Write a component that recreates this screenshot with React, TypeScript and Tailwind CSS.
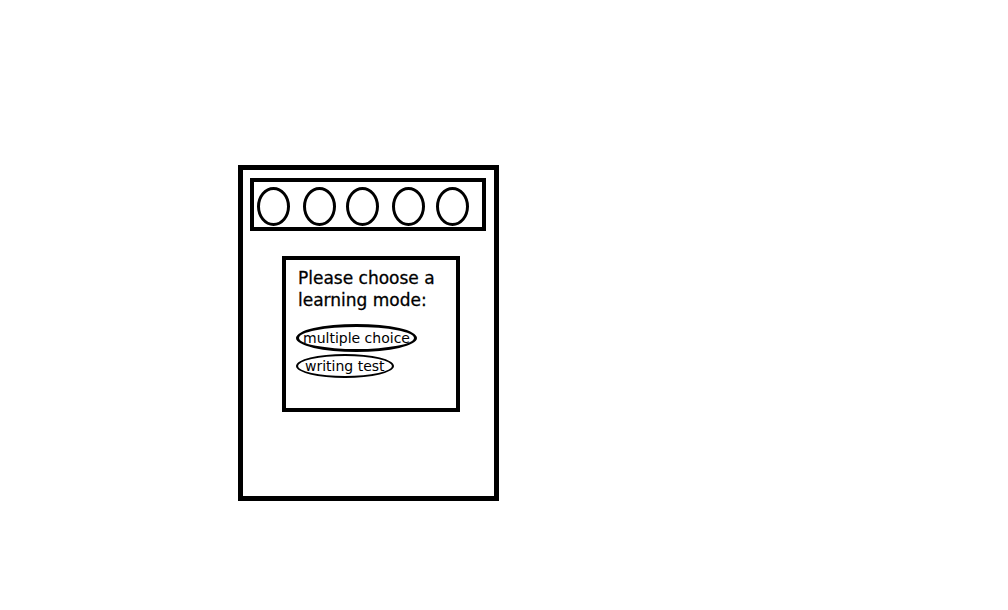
import React from "react";

const circleGaps = ["ml-[3px]", "ml-[13px]", "ml-[10px]", "ml-[13px]", "ml-[11px]"];

export default function App() {
    return (
        <div className="w-[1008px] h-[610px] bg-white overflow-hidden" style={{ fontFamily: '"DejaVu Sans", sans-serif' }}>
            <div className="ml-[238px] mt-[165px] w-[261px] h-[336px] border-[5px] border-black flex flex-col">
                {/* top bar with circles */}
                <div className="ml-[7px] mt-[8px] w-[236px] h-[53px] border-[4px] border-black flex items-start pt-[5px]">
                    {circleGaps.map((g, i) => (
                        <div key={i} className={`${g} w-[33px] h-[39px] rounded-[50%] border-[3px] border-black`} />
                    ))}
                </div>

                {/* mode dialog */}
                <div className="ml-[39px] mt-[25px] w-[178px] h-[156px] border-[4px] border-black flex flex-col pl-[12px] pt-[7px]">
                    <p className="text-[17px] leading-[22px] text-black [-webkit-text-stroke:0.3px_black]">
                        Please choose a<br />learning mode:
                    </p>
                    <div className="flex flex-col items-start mt-[13px] -ml-[2px] gap-[2px]">
                        <span className="h-[28px] px-[4px] flex items-center rounded-[50%] border-[3px] border-black text-[14px] text-black">
                            multiple choice
                        </span>
                        <span className="h-[24px] px-[7px] flex items-center rounded-[50%] border-[2px] border-black text-[14px] text-black">
                            writing test
                        </span>
                    </div>
                </div>
            </div>
        </div>
    );
}
